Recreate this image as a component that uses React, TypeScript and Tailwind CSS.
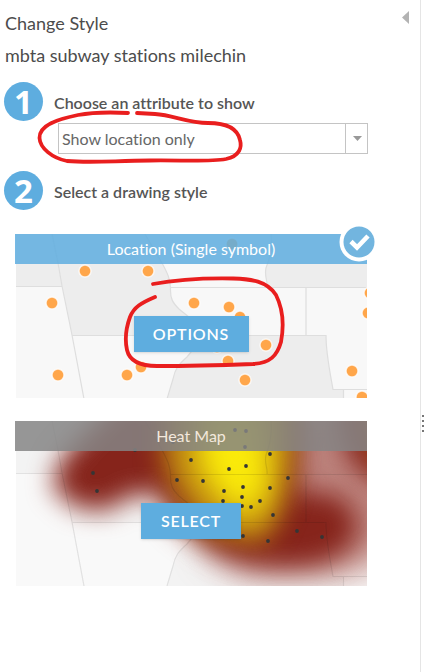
import type { ReactNode } from "react";

type Point = [number, number];

const stations: Point[] = [
  [70, 37], [133, 37], [37, 69], [43, 141], [112, 141], [126, 133], [179, 69],
  [214, 73], [225, 83], [251, 111], [213, 127], [230, 146], [337, 137],
  [347, 163], [355, 59], [353, 79], [202, 113], [217, 10],
];

const heatPoints: Point[] = [
  [78, 52], [82, 70], [120, 29], [158, 21], [176, 39], [162, 59], [188, 60],
  [220, 9], [231, 10], [230, 26], [255, 33], [231, 45], [214, 48], [273, 57],
  [255, 67], [228, 66], [209, 70], [227, 76], [208, 80], [245, 80], [227, 85],
  [236, 86], [258, 94], [282, 110], [307, 116], [228, 115], [253, 120],
];

function Boundaries() {
  return (
    <g fill="none" stroke="#dedede" strokeWidth="1.2">
      <path d="M37 0L43 29L47 52L57 101L69 165" />
      <path d="M1 52.500H47M57 101.500H175" />
      <path d="M130 0L147 29C153 40 155 45 155.500 54C155 65 158 69 164 75C171 81 181 86 182 98C183 110 178 116 172 123C163 131 160 135 158 145L152 165" />
      <path d="M155 53.500H352M291 53.500V101.500M182 101.500H311C311 120 315 138 318 155.500H352M328.500 155.500V165" />
      <path d="M256 0C257 12 255 24 251 34C249 43 253 46 252 53.500" />
    </g>
  );
}

function BaseMap() {
  return (
    <>
      <rect x="1" width="351" height="165" fill="#f8f8f8" />
      <path d="M1 0H37L47 52H1Z" fill="#ededed" />
      <path d="M37 0H130L147 29C153 40 155 45 155.500 54C155 65 158 69 164 75C171 81 181 86 182 101H57L47 52Z" fill="#ededed" />
      <path d="M256 0H352V53H252C253 46 249 43 251 34C255 24 257 12 256 0Z" fill="#ededed" />
      <path d="M182 101H311C311 120 315 138 318 155H328.500V165H152L158 145C160 135 163 131 172 123C178 116 183 110 182 101Z" fill="#ededed" />
    </>
  );
}

function LocationMap() {
  return (
    <svg viewBox="0 0 352 164" preserveAspectRatio="xMidYMid slice" className="block h-full w-full" aria-hidden="true">
      <BaseMap />
      <Boundaries />
      {stations.map(([x, y]) => (
        <circle key={`${x}-${y}`} cx={x} cy={y} r="6" fill="#ffa64a" stroke="#fff" strokeOpacity="0.75" strokeWidth="1.5" />
      ))}
    </svg>
  );
}

function HeatMap() {
  return (
    <svg viewBox="0 0 352 165" preserveAspectRatio="xMidYMid slice" className="block h-full w-full" aria-hidden="true">
      <defs>
        <filter id="soft" filterUnits="userSpaceOnUse" x="-80" y="-90" width="520" height="340" colorInterpolationFilters="sRGB"><feGaussianBlur stdDeviation="13" /></filter>
        <filter id="wide" filterUnits="userSpaceOnUse" x="-80" y="-90" width="520" height="340" colorInterpolationFilters="sRGB"><feGaussianBlur stdDeviation="17" /></filter>
        <clipPath id="area"><rect x="1" width="351" height="165" /></clipPath>
      </defs>
      <BaseMap />
      <g clipPath="url(#area)">
        <rect width="352" height="165" fill="#fafafa" fillOpacity="0.5" />
        <path d="M255 -20H400V72L370 140L325 155H230L190 128Z" fill="#96352b" fillOpacity="0.6" filter="url(#wide)" />
        <path d="M70 12L110 -25H285L283 72L313 72C341 80 350 108 334 125C312 153 232 152 188 124L158 101L143 73L117 74L91 90L60 86L37 66L45 40Z" fill="#86241b" filter="url(#soft)" />
        <path d="M318 -25H400V70L352 56L334 36Z" fill="#86241b" filter="url(#soft)" />
        <path d="M354 -25H400V38H366Z" fill="#d29a18" filter="url(#soft)" />
        <path d="M147 -30H279L276 43L267 85L248 123L190 111L165 78L148 45Z" fill="#b97d13" filter="url(#soft)" />
        <path d="M183 -30H255L258 52L248 94L226 99L201 77L180 48Z" fill="#f7e60b" filter="url(#wide)" />
        <path d="M201 0H231L243 52L239 79L225 76L211 55L198 36Z" fill="#fff00a" fillOpacity="0.55" filter="url(#soft)" />
        <g opacity="0.8" style={{ mixBlendMode: "multiply" }}><Boundaries /></g>
        {heatPoints.map(([x, y]) => <circle key={`${x}-${y}`} cx={x} cy={y} r="1.9" fill="#353535" />)}
      </g>
    </svg>
  );
}

function Step({ number, children }: { number: number; children: ReactNode }) {
  return (
    <div className="flex items-center gap-[11px] pl-1">
      <span className="flex size-[39px] shrink-0 items-center justify-center rounded-full bg-[#5eaddf] font-['Open_Sans',sans-serif] text-[33px] leading-[39px] font-bold text-white">{number}</span>
      {children}
    </div>
  );
}

function StyleCard({ title, action, selected = false, children }: { title: string; action: string; selected?: boolean; children: ReactNode }) {
  return (
    <article className={selected ? "relative h-[164px]" : "relative h-[165px]"}>
      {children}
      <h2 className={`absolute inset-x-0 top-0 h-[30px] text-center text-[16px] leading-[30px] ${selected ? "bg-[#5eaddf]/85 text-white" : "bg-[#858585]/85 text-[#f3e8dc]"}`}>{title}</h2>
      <div className="absolute inset-x-0 top-[82px] flex justify-center">
        <button type="button" className={`h-9 bg-[#5eaddf] text-[16px] font-semibold tracking-wider text-white shadow-sm ${selected ? "w-[115px]" : "w-[100px]"}`}>{action}</button>
      </div>
      {selected && (
        <svg viewBox="0 0 40 40" className="absolute -top-3 -right-3 size-10" role="img" aria-label="Selected">
          <circle cx="20" cy="20" r="19.500" fill="white" />
          <circle cx="20" cy="20" r="15.500" fill="#72b5df" />
          <path d="M12 19.500L18 25.500L29 14" fill="none" stroke="white" strokeWidth="4.600" />
        </svg>
      )}
    </article>
  );
}

export default function App() {
  return (
    <div className="flex min-h-screen bg-white font-[Lato,sans-serif] text-[#4c4c4c] [font-variant-ligatures:none]">
      <main className="min-w-0 flex-1 border-r border-[#e5e5e5] pt-[7px]">
        <header className="flex items-start justify-between pl-[5px]">
          <div className="text-[18px] leading-8">
            <h1>Change Style</h1>
            <p>mbta subway stations milechin</p>
          </div>
          <button type="button" aria-label="Collapse panel" className="mt-1 mr-[11px]">
            <svg width="7" height="13" viewBox="0 0 7 13"><path d="M7 0V13L0 6.500Z" fill="#b3b3b3" /></svg>
          </button>
        </header>

        <section className="relative mt-[11px]">
          <Step number={1}>
            <label htmlFor="attribute" className="pt-[3px] text-[16px] font-semibold text-[#555]">Choose an attribute to show</label>
          </Step>
          <div className="relative mt-[2px] mr-[52px] ml-[58px]">
            <select id="attribute" className="block h-[31px] w-full appearance-none border border-[#c4c4c4] bg-white pl-[3px] text-[16px] text-[#666]">
              <option>Show location only</option>
            </select>
            <span className="pointer-events-none absolute inset-y-0 right-0 flex w-[23px] items-center justify-center border-l border-[#c4c4c4]">
              <svg width="9" height="5" viewBox="0 0 9 5"><path d="M0 0H9L4.500 5Z" fill="#999" /></svg>
            </span>
          </div>
          <svg viewBox="35 108 212 58" className="pointer-events-none absolute top-[26px] left-[35px] h-[58px] w-[212px]" aria-hidden="true">
            <path d="M128 113C109 112 94 112 78 115C58 119 39 125 39.500 138C40 148 52 158 67 161C90 163 110 161 150 160.500C182 160 209 162 226 159C240 156 242 147 240 140C237 126 222 123 208 123C188 123 173 115 155 114L137 113" fill="none" stroke="#e91e1e" strokeWidth="3.800" strokeLinecap="round" />
          </svg>
        </section>

        <section className="mt-[17px]">
          <Step number={2}>
            <h2 className="pt-[3px] text-[16px] font-semibold text-[#555]">Select a drawing style</h2>
          </Step>
          <div className="relative mt-6 mr-[53px] ml-[15px] flex flex-col gap-[23px]">
            <StyleCard title="Location (Single symbol)" action="OPTIONS" selected><LocationMap /></StyleCard>
            <StyleCard title="Heat Map" action="SELECT"><HeatMap /></StyleCard>
            <svg viewBox="120 274 170 98" className="pointer-events-none absolute top-10 left-[105px] h-[98px] w-[170px]" aria-hidden="true">
              <path d="M155 297C141 303 134 307 130 317C126 328 125 341 127 350C130 363 143 366 157 366C192 366 225 365 253 364C270 363 277 356 281 342C284 326 283 309 276 295C267 281 251 279 233 278.500C205 278 174 280 153 284" fill="none" stroke="#e91e1e" strokeWidth="3.800" strokeLinecap="round" />
            </svg>
          </div>
        </section>
      </main>
      <aside className="flex w-[3px] flex-col items-end justify-start pt-[415px]" aria-label="Resize handle">
        <svg width="2" height="18" viewBox="0 0 2 18" fill="#777" aria-hidden="true"><path d="M0 0H2V2H0ZM0 5H2V7H0ZM0 10H2V12H0ZM0 15H2V17H0Z" /></svg>
      </aside>
    </div>
  );
}
